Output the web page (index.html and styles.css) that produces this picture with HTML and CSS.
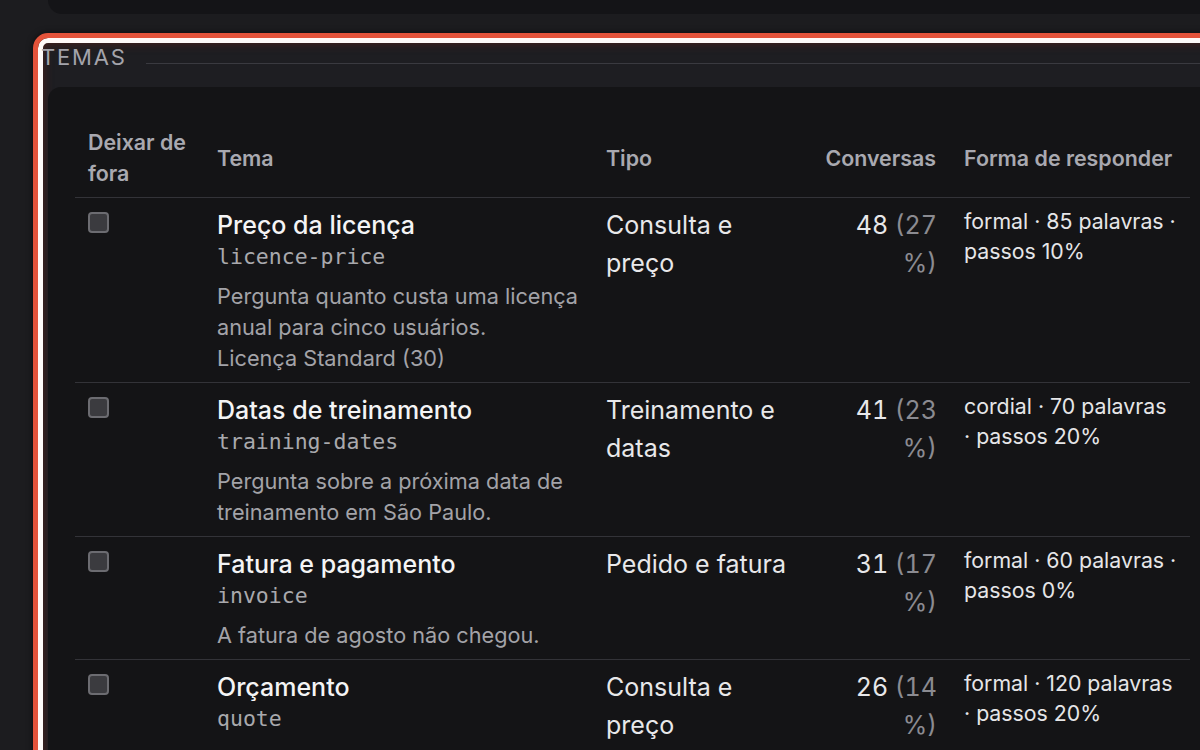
FILE: index.html
```html
<!DOCTYPE html>
<html lang="pt-BR">
<head>
<meta charset="utf-8">
<title>Temas</title>
<link rel="stylesheet" href="styles.css">
</head>
<body>
<div class="page">
  <div class="top-card"></div>
  <section class="topics">
    <div class="topics-head">
      <h2>TEMAS</h2>
      <span class="rule"></span>
    </div>
    <div class="card">
      <table class="topic-table">
        <colgroup>
          <col class="w-skip">
          <col class="w-topic">
          <col class="w-type">
          <col class="w-count">
          <col class="w-style">
        </colgroup>
        <thead>
          <tr>
            <th>Deixar de fora</th>
            <th>Tema</th>
            <th>Tipo</th>
            <th class="num">Conversas</th>
            <th>Forma de responder</th>
          </tr>
        </thead>
        <tbody>
          <tr>
            <td><input type="checkbox" class="check" aria-label="Deixar de fora"></td>
            <td>
              <div class="title">Preço da licença</div>
              <div class="slug">licence-price</div>
              <div class="desc">Pergunta quanto custa uma licença anual para cinco usuários.<br>Licença Standard (30)</div>
            </td>
            <td class="type">Consulta e preço</td>
            <td class="num">48 <span class="pct">(27 %)</span></td>
            <td class="style">formal · 85 palavras · passos 10%</td>
          </tr>
          <tr>
            <td><input type="checkbox" class="check" aria-label="Deixar de fora"></td>
            <td>
              <div class="title">Datas de treinamento</div>
              <div class="slug">training-dates</div>
              <div class="desc">Pergunta sobre a próxima data de treinamento em São Paulo.</div>
            </td>
            <td class="type">Treinamento e datas</td>
            <td class="num">41 <span class="pct">(23 %)</span></td>
            <td class="style">cordial · 70 palavras · passos 20%</td>
          </tr>
          <tr>
            <td><input type="checkbox" class="check" aria-label="Deixar de fora"></td>
            <td>
              <div class="title">Fatura e pagamento</div>
              <div class="slug">invoice</div>
              <div class="desc">A fatura de agosto não chegou.</div>
            </td>
            <td class="type">Pedido e fatura</td>
            <td class="num">31 <span class="pct">(17 %)</span></td>
            <td class="style">formal · 60 palavras · passos 0%</td>
          </tr>
          <tr>
            <td><input type="checkbox" class="check" aria-label="Deixar de fora"></td>
            <td>
              <div class="title">Orçamento</div>
              <div class="slug">quote</div>
            </td>
            <td class="type">Consulta e preço</td>
            <td class="num">26 <span class="pct">(14 %)</span></td>
            <td class="style">formal · 120 palavras · passos 20%</td>
          </tr>
        </tbody>
      </table>
    </div>
  </section>
</div>
</body>
</html>
```

FILE: styles.css
```css
html, body {
  margin: 0;
  padding: 0;
  background: #1c1c1f;
}
body {
  width: 1200px;
  height: 750px;
  overflow: hidden;
  font-family: Inter, "Noto Sans", sans-serif;
  color: #e8e8ea;
}
.page {
  width: 1330px;
  padding-left: 33px;
}
.top-card {
  margin-left: 15px;
  height: 14px;
  background: #141417;
  border-radius: 0 0 0 16px;
}
.topics {
  margin-top: 19px;
  border: 5px solid #e4533a;
  border-radius: 15px;
  background: #1e1e22;
  padding: 5px 0 0 3px;
  box-shadow:
    inset 0 0 0 5px #fffaf8,
    inset 0 0 10px 6px rgba(110, 36, 26, 0.55),
    0 0 6px rgba(0, 0, 0, 0.6);
}
.topics-head {
  display: flex;
  align-items: flex-end;
  gap: 19px;
  height: 28px;
}
.topics-head h2 {
  margin: 0;
  font-size: 22px;
  line-height: 28px;
  font-weight: 400;
  letter-spacing: 1.8px;
  color: #a4a4ab;
}
.rule {
  flex: 1;
  height: 1px;
  background: #3a3a40;
  margin-bottom: 7px;
}
.card {
  margin: 16px 0 0 7px;
  background: #141416;
  border-radius: 13px 0 0 0;
  padding: 32px 0 80px 27px;
}
.topic-table {
  border-collapse: collapse;
  table-layout: fixed;
  width: 1115px;
}
.w-skip { width: 129px; }
.w-topic { width: 389px; }
.w-type { width: 218px; }
.w-count { width: 140px; }
.w-style { width: 239px; }
.topic-table th {
  padding: 8px 13px;
  font-size: 21.4px;
  line-height: 31px;
  font-weight: 600;
  color: #a9a9b0;
  text-align: left;
  vertical-align: middle;
}
.topic-table th.num {
  padding-right: 15px;
}
.topic-table tr {
  border-bottom: 1px solid #333338;
}
.topic-table td {
  padding: 8px 13px;
  vertical-align: top;
  font-size: 25px;
  line-height: 38px;
  color: #e8e8ea;
}
.topic-table .num {
  text-align: right;
}
.topic-table td.num {
  padding-left: 30px;
  padding-right: 14px;
  font-variant-numeric: tabular-nums;
}
.pct {
  color: #8b8b91;
}
.check {
  appearance: none;
  -webkit-appearance: none;
  display: block;
  box-sizing: border-box;
  width: 21px;
  height: 21px;
  margin: 6px 0 0 0;
  border: 2px solid #6c6c71;
  border-radius: 4px;
  background: #3b3b3f;
}
.title {
  font-size: 25px;
  line-height: 38px;
  font-weight: 500;
  color: #f4f4f5;
}
.slug {
  font-family: "DejaVu Sans Mono", monospace;
  font-size: 21.5px;
  line-height: 26px;
  color: #a9a9ad;
}
.desc {
  margin-top: 11px;
  font-size: 21.7px;
  line-height: 31px;
  color: #a3a3a8;
}
.topic-table td.style {
  font-size: 21.3px;
  line-height: 30px;
  color: #e6e6e8;
  padding-top: 8px;
}
```
